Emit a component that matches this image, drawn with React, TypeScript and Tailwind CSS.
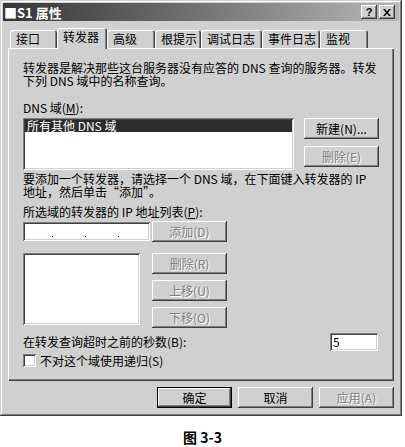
// App.tsx — "S1 属性" DNS server properties dialog, 转发器 tab (Windows 2000 style)

const raised =
  "shadow-[inset_-1px_-1px_#404040,inset_1px_1px_#ffffff,inset_-2px_-2px_#808080,inset_2px_2px_#d0d0d0]";
const sunken =
  "shadow-[inset_1px_1px_#808080,inset_-1px_-1px_#ffffff,inset_2px_2px_#404040,inset_-2px_-2px_#d0d0d0]";
const disabledText = "text-[#808080] [text-shadow:1px_1px_0_#ffffff]";

// ---------------------------------------------------------------------------
// Button
// ---------------------------------------------------------------------------

interface BtnProps {
  label: string;
  disabled?: boolean;
  primary?: boolean;
}

function Btn({ label, disabled = false, primary = false }: BtnProps) {
  const frame = primary
    ? "shadow-[inset_0_0_0_1px_#000000,inset_-2px_-2px_#404040,inset_2px_2px_#ffffff,inset_-3px_-3px_#808080]"
    : raised;
  return (
    <div
      className={`w-[75px] h-[21px] shrink-0 flex items-center justify-center bg-[#d0d0d0] ${frame} ${
        disabled ? disabledText : "text-black"
      }`}
    >
      {label}
    </div>
  );
}

// ---------------------------------------------------------------------------
// Tabs
// ---------------------------------------------------------------------------

const tabs = [
  { name: "接口", w: "w-[47px]" },
  { name: "转发器", w: "w-[50px]", active: true },
  { name: "高级", w: "w-[48px]" },
  { name: "根提示", w: "w-[46px]" },
  { name: "调试日志", w: "w-[61px]" },
  { name: "事件日志", w: "w-[58px]" },
  { name: "监视", w: "w-[48px]" },
];

export default function App() {
  return (
    <div className="w-[405px] h-[447px] bg-white text-[12px] leading-[12px] text-black font-['Noto_Sans_CJK_SC',sans-serif]">
      {/* Window */}
      <div className="w-[402px] h-[416px] bg-[#d0d0d0] pt-[3px] px-[3px] flex flex-col shadow-[inset_-1px_-1px_#404040,inset_1px_1px_#d0d0d0,inset_-2px_-2px_#808080,inset_2px_2px_#ffffff]">
        {/* Title bar */}
        <div className="h-[18px] flex items-center bg-linear-to-r from-[#363636] to-[#b8b8b8] pl-[1px] pr-[4px]">
          <span className="text-white font-bold text-[13px] leading-[13px]">■S1 属性</span>
          <div className="ml-auto flex gap-[2px]">
            <div className={`w-[16px] h-[14px] bg-[#d0d0d0] ${raised} flex items-center justify-center font-bold text-[11px] leading-[11px] font-['Liberation_Sans',sans-serif]`}>
              ?
            </div>
            <div className={`w-[16px] h-[14px] bg-[#d0d0d0] ${raised} flex items-center justify-center`}>
              <svg width="8" height="7" viewBox="0 0 8 7">
                <path d="M0 0h2l2 2.5L6 0h2L5 3.5 8 7H6L4 4.5 2 7H0l3-3.5z" fill="#000" />
              </svg>
            </div>
          </div>
        </div>

        {/* Tab strip */}
        <div className="mt-[7px] mx-[5px] h-[20px] pl-[2px] flex items-end">
          {tabs.map((t) =>
            t.active ? (
              <div
                key={t.name}
                className={`${t.w} h-[21px] -mb-[1px] relative z-10 bg-[#d0d0d0] rounded-t-[3px] pl-[6px] pb-[3px] flex items-center shadow-[inset_1px_1px_#ffffff,inset_-1px_0_#404040,inset_-2px_0_#808080]`}
              >
                {t.name}
              </div>
            ) : (
              <div
                key={t.name}
                className={`${t.w} h-[18px] bg-[#d0d0d0] rounded-t-[3px] pl-[6px] flex items-center shadow-[inset_1px_1px_#ffffff,inset_-1px_0_#404040,inset_-2px_0_#808080]`}
              >
                {t.name}
              </div>
            )
          )}
        </div>

        {/* Panel */}
        <div className="mx-[5px] h-[333px] px-[15px] pt-[13px] flex flex-col shadow-[inset_1px_1px_#ffffff,inset_-1px_-1px_#404040,inset_-2px_-2px_#808080]">
          <p className="whitespace-nowrap leading-[13px]">
            转发器是解决那些这台服务器没有应答的 DNS 查询的服务器。转发
            <br />
            下列 DNS 域中的名称查询。
          </p>

          <p className="mt-[15px]">
            DNS 域(<span className="underline">M</span>):
          </p>

          <div className="mt-[4px] flex">
            <div className={`w-[272px] h-[52px] bg-white p-[2px] ${sunken}`}>
              <div className="h-[12px] bg-[#2c2c2c] text-white pl-[2px] flex items-center">
                所有其他 DNS 域
              </div>
            </div>
            <div className="ml-[10px] flex flex-col gap-[7px]">
              <Btn label="新建(N)..." />
              <Btn label="删除(E)" disabled />
            </div>
          </div>

          <p className="mt-[2px] whitespace-nowrap leading-[13px]">
            要添加一个转发器，请选择一个 DNS 域，在下面键入转发器的 IP
            <br />
            地址，然后单击“添加”。
          </p>

          <p className="mt-[8px]">
            所选域的转发器的 IP 地址列表(<span className="underline">P</span>):
          </p>

          <div className="mt-[3px] flex items-start">
            <div className={`mt-[1px] w-[127px] h-[19px] bg-white ${sunken} flex items-end pb-[4px] pl-[29px] gap-[32px]`}>
              <span className="w-[1px] h-[1px] bg-black" />
              <span className="w-[1px] h-[1px] bg-black" />
              <span className="w-[1px] h-[1px] bg-black" />
            </div>
            <div className="ml-[2px]">
              <Btn label="添加(D)" disabled />
            </div>
          </div>

          <div className="mt-[11px] flex items-start">
            <div className={`w-[117px] h-[72px] bg-white ${sunken}`} />
            <div className="ml-[12px] flex flex-col gap-[6px]">
              <Btn label="删除(R)" disabled />
              <Btn label="上移(U)" disabled />
              <Btn label="下移(O)" disabled />
            </div>
          </div>

          <div className="mt-[5px] flex items-center justify-between pr-[1px]">
            <span>在转发查询超时之前的秒数(B):</span>
            <div className={`w-[48px] h-[18px] bg-white ${sunken} pl-[3px] flex items-center`}>5</div>
          </div>

          <div className="mt-[3px] flex items-center">
            <div className={`w-[13px] h-[13px] bg-white ${sunken}`} />
            <span className="ml-[4px]">不对这个域使用递归(S)</span>
          </div>
        </div>

        {/* Dialog buttons */}
        <div className="mt-[6px] mr-[5px] flex justify-end gap-[6px]">
          <Btn label="确定" primary />
          <Btn label="取消" />
          <Btn label="应用(A)" disabled />
        </div>
      </div>

      {/* Figure caption */}
      <p className="mt-[13px] text-center font-bold text-[14px] leading-[16px]">图 3-3</p>
    </div>
  );
}
